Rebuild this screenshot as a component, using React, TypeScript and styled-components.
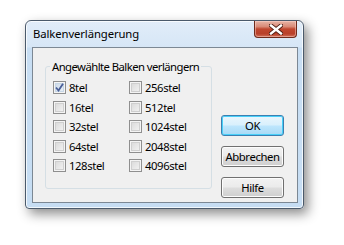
import React from "react";
import styled, { createGlobalStyle } from "styled-components";

const Global = createGlobalStyle`
  html, body { margin: 0; padding: 0; background: #ffffff; }
  body { font-family: "Noto Sans", "Open Sans", sans-serif; font-size: 11px; color: #000; }
`;

const Desktop = styled.div`
  width: 344px;
  height: 245px;
  padding: 20px 0 0 25px;
  box-sizing: border-box;
`;

const Window = styled.div`
  width: 279px;
  height: 189px;
  box-sizing: border-box;
  border: 1px solid #4b5a6b;
  border-radius: 6px 6px 4px 4px;
  background: linear-gradient(180deg, #e2edf9 0px, #d6e6f6 26px, #c8def3 27px, #c6ddf3 100%);
  box-shadow: 4px 5px 12px rgba(0, 0, 0, 0.45), inset 0 0 0 1px rgba(255, 255, 255, 0.75);
  display: flex;
  flex-direction: column;
`;

const TitleBar = styled.div`
  height: 26px;
  display: flex;
  align-items: flex-start;
  justify-content: space-between;
  padding: 0 6px 0 7px;
  flex: none;
`;

const Title = styled.span`
  margin-top: 5px;
  line-height: 16px;
  font-size: 11.3px;
  letter-spacing: -0.1px;
  color: #000;
  white-space: nowrap;
`;

const CloseButton = styled.div`
  width: 43px;
  height: 17px;
  box-sizing: border-box;
  border: 1px solid #6e2a1c;
  border-top: none;
  border-radius: 0 0 4px 4px;
  background: linear-gradient(180deg, #e8b4a6 0%, #d98b78 35%, #c0472f 50%, #b8402a 80%, #d0705a 100%);
  display: flex;
  align-items: center;
  justify-content: center;
  box-shadow: inset 0 0 0 1px rgba(255, 220, 210, 0.45);
`;

const Client = styled.div`
  margin: 0 5px 5px 6px;
  height: 156px;
  box-sizing: border-box;
  border: 1px solid #7c8894;
  background: #f0f0f0;
  display: flex;
  align-items: flex-start;
  padding: 11px 13px 0 12px;
  gap: 9px;
`;

const Group = styled.fieldset`
  margin: 0;
  width: 167px;
  height: 130px;
  box-sizing: border-box;
  border: 1px solid #d5dfe5;
  border-radius: 3px;
  padding: 4px 0 0 7px;
  min-inline-size: 0;
`;

const Legend = styled.legend`
  padding: 0 2px;
  margin-left: -3px;
  font-size: 11.3px;
  letter-spacing: -0.55px;
  line-height: 15px;
  color: #000;
  white-space: nowrap;
`;

const Grid = styled.div`
  display: grid;
  grid-template-columns: 76px 76px;
  grid-auto-flow: column;
  grid-template-rows: repeat(5, 19.5px);
`;

const Option = styled.label`
  display: flex;
  align-items: center;
  gap: 3px;
  font-size: 11.3px;
  letter-spacing: -0.4px;
  line-height: 15px;
  color: #000;
  white-space: nowrap;
`;

const Box = styled.span<{ $checked?: boolean }>`
  width: 13px;
  height: 13px;
  box-sizing: border-box;
  border: 1px solid #8f8f8f;
  display: flex;
  align-items: center;
  justify-content: center;
  box-shadow: inset 0 0 0 1px #f4f4f4, inset 0 0 0 2px ${(p) => (p.$checked ? "#c6d6e6" : "#cfcfcf")};
  background: ${(p) =>
    p.$checked
      ? "linear-gradient(135deg, #c8d6e6 0%, #eef3f8 100%)"
      : "linear-gradient(135deg, #d6d6d6 0%, #f6f6f6 100%)"};
`;

const Buttons = styled.div`
  margin-top: 56px;
  display: flex;
  flex-direction: column;
  gap: 10px;
`;

const Button = styled.div<{ $default?: boolean }>`
  width: 63px;
  height: 21px;
  box-sizing: border-box;
  border: 1px solid ${(p) => (p.$default ? "#3c7fb1" : "#707070")};
  border-radius: 3px;
  background: ${(p) =>
    p.$default
      ? "linear-gradient(180deg, #eaf6fd 0%, #d9f0fc 48%, #bee6fd 52%, #a7d9f5 100%)"
      : "linear-gradient(180deg, #f2f2f2 0%, #ebebeb 48%, #dddddd 52%, #cfcfcf 100%)"};
  box-shadow: inset 0 0 0 1px ${(p) => (p.$default ? "#48d0f9" : "#fcfcfc")};
  display: flex;
  align-items: center;
  justify-content: center;
  font-size: 11.3px;
  letter-spacing: -0.4px;
  line-height: 15px;
  color: #000;
  white-space: nowrap;
`;

const CloseGlyph = () => (
  <svg width="14" height="11" viewBox="0 0 14 11">
    <path d="M2 1.5 L12 9.5 M12 1.5 L2 9.5" stroke="#4a1a10" strokeWidth="4.2" strokeLinecap="square" />
    <path d="M2 1.5 L12 9.5 M12 1.5 L2 9.5" stroke="#ffffff" strokeWidth="2.4" strokeLinecap="square" />
  </svg>
);

const Check = () => (
  <svg width="9" height="9" viewBox="0 0 9 9">
    <path d="M1 4.5 L3.5 7.5 L8 0.8" fill="none" stroke="#4a5f97" strokeWidth="1.8" />
  </svg>
);

const options = [
  { label: "8tel", checked: true },
  { label: "16tel" },
  { label: "32stel" },
  { label: "64stel" },
  { label: "128stel" },
  { label: "256stel" },
  { label: "512tel" },
  { label: "1024stel" },
  { label: "2048stel" },
  { label: "4096stel" },
];

export default function App() {
  return (
    <>
      <Global />
      <Desktop>
        <Window>
          <TitleBar>
            <Title>Balkenverlängerung</Title>
            <CloseButton>
              <CloseGlyph />
            </CloseButton>
          </TitleBar>
          <Client>
            <Group>
              <Legend>Angewählte Balken verlängern</Legend>
              <Grid>
                {options.map((o) => (
                  <Option key={o.label}>
                    <Box $checked={o.checked}>{o.checked && <Check />}</Box>
                    {o.label}
                  </Option>
                ))}
              </Grid>
            </Group>
            <Buttons>
              <Button $default>OK</Button>
              <Button>Abbrechen</Button>
              <Button>Hilfe</Button>
            </Buttons>
          </Client>
        </Window>
      </Desktop>
    </>
  );
}
